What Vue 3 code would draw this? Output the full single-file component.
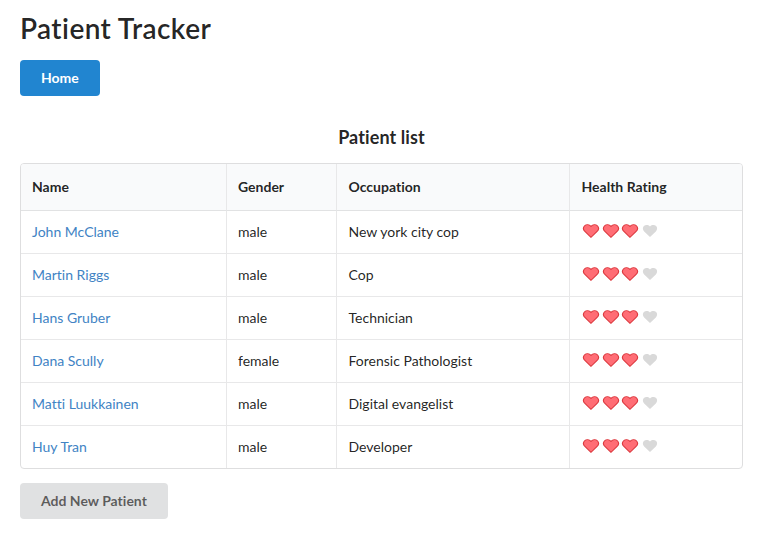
<script setup>
const patients = [
  { name: 'John McClane', gender: 'male', occupation: 'New york city cop', rating: 3 },
  { name: 'Martin Riggs', gender: 'male', occupation: 'Cop', rating: 3 },
  { name: 'Hans Gruber', gender: 'male', occupation: 'Technician', rating: 3 },
  { name: 'Dana Scully', gender: 'female', occupation: 'Forensic Pathologist', rating: 3 },
  { name: 'Matti Luukkainen', gender: 'male', occupation: 'Digital evangelist', rating: 3 },
  { name: 'Huy Tran', gender: 'male', occupation: 'Developer', rating: 3 },
]
const maxRating = 4
</script>

<template>
  <main class="page">
    <h1>Patient Tracker</h1>
    <a class="button primary">Home</a>
    <h3>Patient list</h3>
    <table>
      <colgroup>
        <col class="col-name" />
        <col class="col-gender" />
        <col class="col-occupation" />
        <col />
      </colgroup>
      <thead>
        <tr>
          <th>Name</th>
          <th>Gender</th>
          <th>Occupation</th>
          <th>Health Rating</th>
        </tr>
      </thead>
      <tbody>
        <tr v-for="p in patients" :key="p.name">
          <td><a class="link">{{ p.name }}</a></td>
          <td>{{ p.gender }}</td>
          <td>{{ p.occupation }}</td>
          <td>
            <div class="rating">
              <svg
                v-for="n in maxRating"
                :key="n"
                class="heart"
                :class="{ active: n <= p.rating }"
                viewBox="0 0 18 16"
              >
                <path d="M9 14.3 L2.9 8.4 C1.2 6.7 1.2 4.3 2.6 2.9 C4.3 1.3 7.1 1.4 9 3.3 C10.9 1.4 13.7 1.3 15.4 2.9 C16.8 4.3 16.8 6.7 15.1 8.4 Z" />
              </svg>
            </div>
          </td>
        </tr>
      </tbody>
    </table>
    <button class="button" type="button">Add New Patient</button>
  </main>
</template>

<style>
body {
  background: #fff;
}
</style>

<style scoped>
.page {
  box-sizing: border-box;
  width: 762px;
  height: 534px;
  padding: 10px 19px 0 20px;
  font-family: Lato, "Liberation Sans", sans-serif;
  font-size: 14px;
  line-height: 20px;
  font-variant-ligatures: none;
  color: rgba(0, 0, 0, 0.87);
}
h1 {
  margin: 0 0 14px;
  font-size: 28px;
  line-height: 36px;
  font-weight: 600;
  letter-spacing: 0.42px;
}
h3 {
  margin: 30px 0 15px;
  font-size: 18px;
  line-height: 22px;
  font-weight: 700;
  letter-spacing: 0.1px;
  text-align: center;
}
.button {
  display: block;
  box-sizing: border-box;
  width: fit-content;
  height: 36px;
  padding: 11px 21px;
  border: 0;
  border-radius: 4px;
  background: #e0e1e2;
  color: rgba(0, 0, 0, 0.6);
  font-family: inherit;
  font-size: 14px;
  font-variant-ligatures: none;
  line-height: 14px;
  font-weight: 700;
}
.primary {
  background: #2185d0;
  color: #fff;
}
table {
  width: 100%;
  margin-bottom: 14px;
  table-layout: fixed;
  border: 1px solid #dededf;
  border-radius: 4px;
  border-collapse: separate;
  border-spacing: 0;
}
.col-name {
  width: 205px;
}
.col-gender {
  width: 110px;
}
.col-occupation {
  width: 233px;
}
th,
td {
  box-sizing: border-box;
  padding: 0 11px;
  text-align: left;
  border-left: 1px solid #e8e8e9;
}
th:nth-child(n + 3),
td:nth-child(n + 3) {
  padding-left: 11.5px;
}
th:first-child,
td:first-child {
  border-left: 0;
}
th {
  height: 47px;
  background: #f9fafb;
  border-bottom: 1px solid #e1e2e3;
  font-weight: 700;
}
th:first-child {
  border-top-left-radius: 3px;
}
th:last-child {
  border-top-right-radius: 3px;
}
td {
  height: 43px;
  border-bottom: 1px solid #e8e8e9;
}
tbody tr:last-child td {
  height: 42px;
  border-bottom: 0;
}
.link {
  color: #4183c4;
}
.rating {
  display: flex;
  gap: 1.6px;
  padding: 0 0 3px 0.6px;
}
.heart {
  width: 18px;
  height: 16px;
  fill: #d9d9d9;
  transform: scale(0.96);
}
.heart.active {
  fill: #ff6d75;
  stroke: #dd3a40;
  stroke-width: 1.1;
  transform: none;
}
</style>
